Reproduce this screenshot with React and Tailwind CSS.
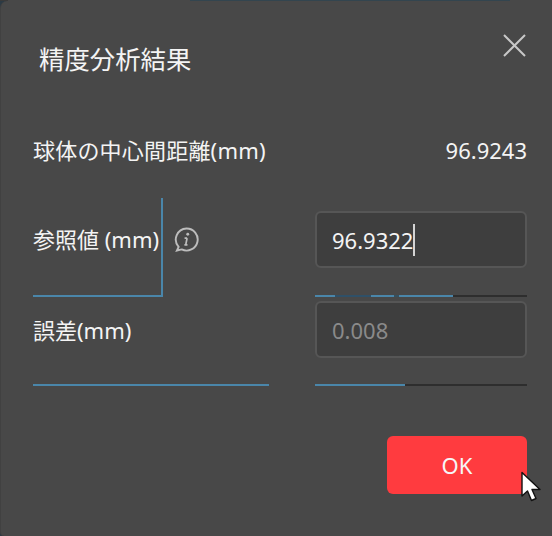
export default function App() {
  return (
    <div className="relative w-[552px] h-[536px] overflow-hidden bg-[#2c3a44] font-['Noto_Sans','Noto_Sans_CJK_JP',sans-serif] text-[#f4f4f4]">
      <div className="flex h-px">
        <div className="w-[8px] bg-[#3a3a3a]" />
        <div className="w-[182px] bg-[#484848]" />
        <div className="w-[320px] bg-[#33454f]" />
        <div className="flex-1 bg-[#484848]" />
      </div>
      <div className="flex flex-col h-[535px] rounded-tl-[7px] rounded-bl-[4px] border-l border-[#414141] bg-[#484848] pr-[25px] pl-[32px]">
        <div className="h-[129px] flex justify-between shrink-0">
          <h1 className="ml-[6px] mt-[40px] text-[25.4px] leading-[36px] font-normal">精度分析結果</h1>
          <button className="mt-[33px] mr-[1px] w-[23px] h-[23px] text-[#c8c8c8]">
            <svg viewBox="0 0 23 23" width="23" height="23" fill="none" stroke="currentColor" strokeWidth="2">
              <path d="M1 1 L22 22 M22 1 L1 22" />
            </svg>
          </button>
        </div>
        <div className="h-[68px] shrink-0 flex justify-between items-start">
          <span className="text-[22px] leading-[40px] tracking-[0.2px]">球体の中心間距離(mm)</span>
          <span className="text-[22px] leading-[40px]">96.9243</span>
        </div>
        <div className="h-[99px] shrink-0 flex">
          <div className="w-[130px] shrink-0 border-b-2 border-r-2 border-[#4a86aa] pt-[21px]">
            <span className="text-[22px] leading-[40px] whitespace-nowrap">参照値 (mm)</span>
          </div>
          <div className="w-[152px] shrink-0 pl-[11px] pt-[29px]">
            <svg viewBox="0 0 26 26" width="25" height="25" fill="none" stroke="#bdbdbd" strokeWidth="2">
              <path d="M13 1.5 A11.5 11.5 0 1 1 8 23.3 L3 24.5 L4.8 20.6 A11.5 11.5 0 0 1 13 1.5 Z" />
              <path d="M13.6 11.5 L12.2 18.6 M11 11.5 H13.6 M10.8 18.6 H14" strokeWidth="1.8" />
              <circle cx="14.3" cy="7.6" r="1.5" fill="#bdbdbd" stroke="none" />
            </svg>
          </div>
          <div className="flex-1 flex flex-col justify-between pt-[13px]">
            <div className="h-[57px] rounded-[6px] border-2 border-[#565656] bg-[#3e3e3e] flex items-center pl-[15px]">
              <span className="text-[22px] leading-[30px]">96.9322</span>
              <span className="w-[2px] h-[32px] bg-[#d4d4d4]" />
            </div>
            <div className="flex h-[2px]">
              <div className="w-[20px] bg-[#4a86aa]" />
              <div className="w-[36px] bg-[#2f5068]" />
              <div className="w-[23px] bg-[#4a86aa]" />
              <div className="w-[5px] bg-[#35505f]" />
              <div className="w-[54px] bg-[#4a86aa]" />
              <div className="flex-1 bg-[#2e2e2e]" />
            </div>
          </div>
        </div>
        <div className="h-[89px] shrink-0 flex">
          <div className="w-[236px] shrink-0 border-b-2 border-[#4a86aa] pt-[13px]">
            <span className="text-[22px] leading-[40px] whitespace-nowrap">誤差(mm)</span>
          </div>
          <div className="w-[46px] shrink-0" />
          <div className="flex-1 flex flex-col justify-between pt-[4px]">
            <div className="h-[57px] rounded-[6px] border-2 border-[#565656] bg-[#3e3e3e] flex items-center pl-[15px]">
              <span className="text-[22px] leading-[30px] text-[#8a8a8a]">0.008</span>
            </div>
            <div className="flex h-[2px]">
              <div className="w-[90px] bg-[#4a86aa]" />
              <div className="flex-1 bg-[#2e2e2e]" />
            </div>
          </div>
        </div>
        <div className="flex justify-end pt-[50px]">
          <button className="w-[140px] h-[58px] rounded-[6px] bg-[#ff3b3f] text-[22px] text-[#f6f6f6]">OK</button>
        </div>
      </div>
      <svg className="absolute left-[520px] top-[471px]" width="22" height="32" viewBox="0 0 22 32">
        <path d="M2 1.5 V25 L7.5 20 L11.5 29.5 L16 27.5 L12 18.5 H20 Z" fill="#fff" stroke="#111" strokeWidth="1.4" strokeLinejoin="round" />
      </svg>
    </div>
  );
}
